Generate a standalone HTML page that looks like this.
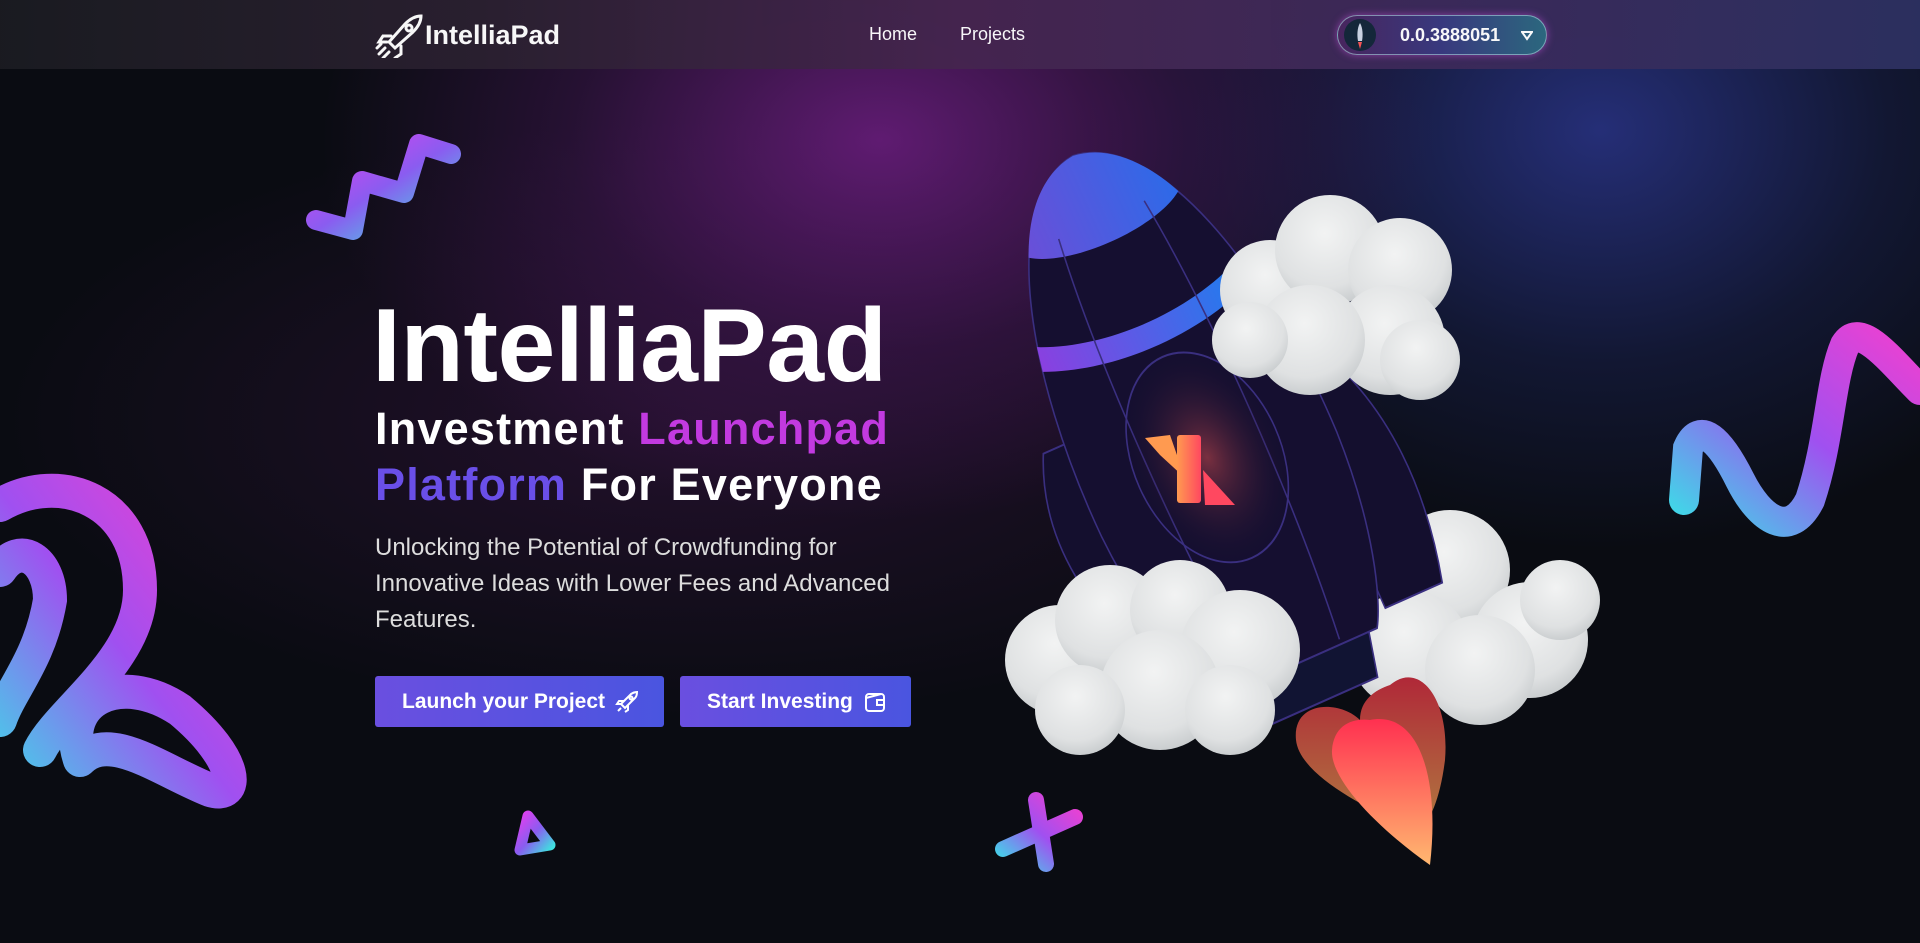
<!DOCTYPE html>
<html><head><meta charset="utf-8"><style>
*{margin:0;padding:0;box-sizing:border-box}
body{width:1920px;height:943px;overflow:hidden;background:#0a0c12;font-family:"Liberation Sans",sans-serif;color:#fff;position:relative}
.bg{position:absolute;inset:0;background:
radial-gradient(ellipse 560px 380px at 880px 140px,rgba(110,30,130,.85),rgba(80,25,100,.4) 55%,transparent 100%),
radial-gradient(ellipse 520px 420px at 1600px 130px,rgba(40,50,130,.9),rgba(30,40,100,.4) 55%,transparent 100%),
radial-gradient(ellipse 700px 300px at 700px 420px,rgba(60,20,70,.5),transparent 100%);}
header{position:absolute;left:0;top:0;width:1920px;height:69px;background:linear-gradient(90deg,#1a1b21 0%,#2a2030 25%,#45254f 50%,#3c2a5a 75%,#2c3060 100%);opacity:.97}
.logo{position:absolute;left:375px;top:12px;display:flex;align-items:center;font-weight:bold;font-size:27px}
.nav{position:absolute;top:24px;font-size:18px}
.wallet{position:absolute;left:1337px;top:15px;width:210px;height:40px;border-radius:20px;border:1.5px solid rgba(180,220,230,.6);background:linear-gradient(90deg,#4a2660,#3a3a80 50%,#2c6a80);box-shadow:0 0 8px rgba(200,80,220,.6)}
.wallet .av{position:absolute;left:6px;top:3px;width:32px;height:32px;border-radius:50%;background:#14283a}
.wallet span{position:absolute;left:62px;top:9px;font-size:18px;font-weight:bold}
h1{position:absolute;left:372px;top:287px;font-size:104px;font-weight:bold;letter-spacing:-0.5px}
.sub{position:absolute;left:375px;top:401px;font-size:45px;font-weight:bold;line-height:56px;letter-spacing:1.2px}
p{position:absolute;left:375px;top:530px;font-size:24px;line-height:36px;color:#ddd;white-space:nowrap}
.btn{position:absolute;top:676px;height:51px;border-radius:3px;background:linear-gradient(90deg,#6a4fe0,#4a55e0);font-size:21px;font-weight:bold;display:flex;align-items:center;padding-left:27px;gap:10px}
</style></head><body>
<div class="bg"></div>
<header>
<div class="logo"><svg width="50" height="46" viewBox="0 0 50 46" fill="none" stroke="#fff" stroke-width="3" stroke-linecap="round"><path d="M14 30 L30 12 C36 6 42 4 46 4 C46 8 44 14 38 20 L20 36 Z"/><path d="M16 24 L8 24 L4 30 L12 30"/><path d="M26 34 L26 42 L20 46"/><path d="M10 36 L4 42 M14 40 L8 46 M6 32 L2 36"/><circle cx="34" cy="16" r="3"/></svg>IntelliaPad</div>
<div class="nav" style="left:869px">Home</div>
<div class="nav" style="left:960px">Projects</div>
<div class="wallet"><div class="av"><svg width="32" height="32"><path d="M16 4 C19 9 19 17 18 22 L14 22 C13 17 13 9 16 4Z" fill="#cfd8e8"/><path d="M14 23 L18 23 L16 30Z" fill="#f55"/></svg></div><span>0.0.3888051</span><svg style="position:absolute;left:183px;top:15px" width="12" height="10"><path d="M1 1 L11 1 L6 8Z" fill="none" stroke="#fff" stroke-width="2"/></svg></div>
</header>

<svg style="position:absolute;left:0;top:0" width="1920" height="943">
<defs>
<linearGradient id="sq" x1="0" y1="0" x2="1" y2="1"><stop offset="0" stop-color="#e040f0"/><stop offset=".5" stop-color="#8a5cf0"/><stop offset="1" stop-color="#40e0e0"/></linearGradient>
<linearGradient id="sq2" x1="0" y1="1" x2="1" y2="0"><stop offset="0" stop-color="#40d8e8"/><stop offset=".5" stop-color="#a050f0"/><stop offset="1" stop-color="#f040d0"/></linearGradient>
<linearGradient id="nose" x1="0" y1="0" x2="1" y2="0"><stop offset="0" stop-color="#6a4fd8"/><stop offset="1" stop-color="#2d6ae8"/></linearGradient>
<linearGradient id="band" x1="0" y1="0" x2="1" y2="0"><stop offset="0" stop-color="#8a40e0"/><stop offset="1" stop-color="#1a80ee"/></linearGradient>
<radialGradient id="cl" cx=".45" cy=".35" r=".7"><stop offset="0" stop-color="#f2f3f3"/><stop offset=".7" stop-color="#dfe1e2"/><stop offset="1" stop-color="#c4c8ca"/></radialGradient>
<linearGradient id="fl" x1="0" y1="0" x2="0" y2="1"><stop offset="0" stop-color="#ff3050"/><stop offset="1" stop-color="#ffb870"/></linearGradient>
<linearGradient id="fl2" x1="0" y1="0" x2="0" y2="1"><stop offset="0" stop-color="#b02838"/><stop offset="1" stop-color="#b07a40"/></linearGradient>
<linearGradient id="xl" x1="0" y1="0" x2="1" y2="0"><stop offset="0" stop-color="#ff9a50"/><stop offset="1" stop-color="#ff4860"/></linearGradient>
<radialGradient id="glow"><stop offset="0" stop-color="#7a3040"/><stop offset="1" stop-color="#1a1232" stop-opacity="0"/></radialGradient>
</defs>
<!-- squiggles -->
<path d="M316 220 L353 230 L362 181 L404 193 L419 144 L451 154" fill="none" stroke="url(#sq)" stroke-width="20" stroke-linecap="round" stroke-linejoin="round"/>
<path d="M0 505 C60 470 140 500 140 590 C140 660 60 710 40 750 M0 570 C20 540 50 560 50 600 C40 660 10 690 0 720 M80 760 C60 700 120 670 180 710 C240 760 240 800 210 790 C160 770 110 730 80 760" fill="none" stroke="url(#sq2)" stroke-width="34" stroke-linecap="round"/>
<path d="M1684 500 L1688 448 C1700 420 1720 440 1740 480 C1760 520 1790 540 1810 500 C1830 440 1830 380 1845 345 C1860 320 1890 360 1920 390" fill="none" stroke="url(#sq2)" stroke-width="30" stroke-linecap="round"/>
<path d="M528 816 L550 845 L520 850 Z" fill="none" stroke="url(#sq)" stroke-width="11" stroke-linejoin="round"/>
<path d="M1003 849 L1075 817 M1036 800 L1046 864" stroke="url(#sq2)" stroke-width="16" stroke-linecap="round"/>
<!-- back cloud -->
<g fill="url(#cl)"><circle cx="1450" cy="570" r="60"/><circle cx="1530" cy="640" r="58"/><circle cx="1410" cy="650" r="60"/><circle cx="1480" cy="670" r="55"/><circle cx="1560" cy="600" r="40"/></g>
<!-- rocket -->
<g transform="translate(1195,430) rotate(-24) scale(0.78,1)">
<path d="M-190 -40 C-240 40 -220 130 -160 210 L-130 210 L-130 -40 Z" fill="#140f2e" stroke="#3a2f80" stroke-width="2"/>
<path d="M190 -20 C240 60 240 150 210 240 L130 240 L130 -20 Z" fill="#140f2e" stroke="#3a2f80" stroke-width="2"/>
<path d="M-100 250 L100 250 L85 300 L-85 300 Z" fill="#111433" stroke="#3a2f80" stroke-width="2"/>
<path d="M0 -300 C110 -290 170 -120 165 60 C160 160 130 230 110 255 L-110 255 C-130 230 -160 160 -165 60 C-170 -120 -110 -290 0 -300Z" fill="#150f30" stroke="#3a2f80" stroke-width="2"/>
<path d="M0 -300 C50 -296 85 -260 105 -225 C60 -200 -60 -200 -105 -225 C-85 -262 -50 -296 0 -300Z" fill="url(#nose)"/>
<path d="M-142 -140 C-60 -110 60 -110 142 -140 L148 -115 C60 -85 -60 -85 -148 -115Z" fill="url(#band)"/>
<path d="M-60 -230 C-80 -100 -80 100 -60 250 M60 -230 C80 -100 80 100 60 250" fill="none" stroke="#3a2f80" stroke-width="2"/>
<ellipse cx="0" cy="30" rx="95" ry="110" fill="url(#glow)" stroke="#3a2f80" stroke-width="2"/>
</g>
<g transform="translate(1195,460)"><path d="M-50 -22 L-25 -25 L-10 18 L-35 -5Z" fill="#ff9a50"/><rect x="-18" y="-25" width="24" height="68" rx="3" fill="url(#xl)"/><path d="M8 10 L40 45 L10 45Z" fill="#ff4860"/></g>
<!-- clouds -->
<g fill="url(#cl)"><circle cx="1270" cy="290" r="50"/><circle cx="1330" cy="250" r="55"/><circle cx="1400" cy="270" r="52"/><circle cx="1390" cy="340" r="55"/><circle cx="1310" cy="340" r="55"/><circle cx="1250" cy="340" r="38"/><circle cx="1420" cy="360" r="40"/></g>
<g fill="url(#cl)"><circle cx="1060" cy="660" r="55"/><circle cx="1110" cy="620" r="55"/><circle cx="1180" cy="610" r="50"/><circle cx="1240" cy="650" r="60"/><circle cx="1160" cy="690" r="60"/><circle cx="1080" cy="710" r="45"/><circle cx="1230" cy="710" r="45"/></g>
<!-- flame -->
<path d="M1390 685 C1420 660 1450 700 1445 760 C1440 800 1430 820 1420 830 C1390 820 1300 780 1296 740 C1292 700 1340 700 1360 720 C1360 700 1375 690 1390 685Z" fill="url(#fl2)"/>
<path d="M1370 720 C1420 710 1440 780 1430 865 C1380 830 1330 780 1332 750 C1334 725 1352 718 1370 720Z" fill="url(#fl)"/>
</svg>

<h1>IntelliaPad</h1>
<div class="sub">Investment <span style="color:#c23ae0">Launchpad</span><br><span style="color:#6a4fe8">Platform</span> For Everyone</div>
<p>Unlocking the Potential of Crowdfunding for<br>Innovative Ideas with Lower Fees and Advanced<br>Features.</p>
<div class="btn" style="left:375px;width:289px">Launch your Project <svg width="24" height="24" fill="none" stroke="#fff" stroke-width="2"><path d="M6 14 L16 4 C19 2 22 2 22 2 C22 2 22 6 20 8 L10 18Z M9 11 L4 11 L2 14 L6 14 M13 15 L13 20 L10 22 M6 18 L3 21"/><circle cx="16" cy="8" r="1.5"/></svg></div>
<div class="btn" style="left:680px;width:231px">Start Investing <svg width="24" height="24" fill="none" stroke="#fff" stroke-width="2"><rect x="3" y="4" width="18" height="17" rx="3"/><path d="M21 10 L14 10 L14 15 L21 15 M3 8 L18 4"/></svg></div>
</body></html>
